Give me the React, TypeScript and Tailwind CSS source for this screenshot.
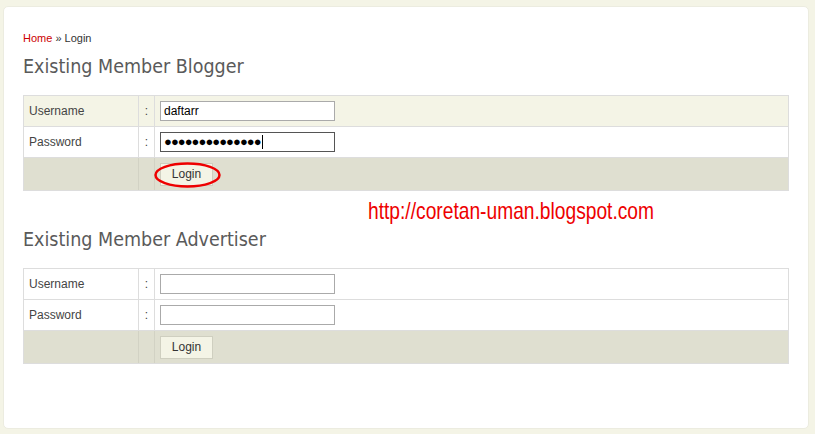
import React from 'react'

const font = { fontFamily: '"Liberation Sans", Arial, sans-serif' }
const headFont = { fontFamily: '"DejaVu Sans Condensed", "DejaVu Sans", sans-serif' }

type Row = { label: string; value?: string; password?: boolean; focused?: boolean }

const Field: React.FC<{ value?: string; password?: boolean; focused?: boolean }> = ({ value, password, focused }) => (
  <div
    className={`w-[175px] h-[20px] bg-white border flex items-center px-[3px] text-[12px] text-black ${focused ? 'border-[#555]' : 'border-[#aaa]'}`}
  >
    {password ? (
      <span className="flex items-center">
        <span className="tracking-[-0.95px] text-[13px]">{'●'.repeat(14)}</span>
        <span className="w-px h-[14px] bg-black ml-[1px]" />
      </span>
    ) : (
      <span>{value}</span>
    )}
  </div>
)

const LoginForm: React.FC<{ rows: Row[]; firstHighlighted?: boolean; circled?: boolean }> = ({ rows, firstHighlighted, circled }) => (
  <div className="border border-[#ddd] text-[12px] text-[#444]">
    {rows.map((row, i) => (
      <div
        key={row.label}
        className={`grid grid-cols-[115px_16px_1fr] h-[31px] border-b border-[#ddd] ${i === 0 && firstHighlighted ? 'bg-[#f4f4e6]' : 'bg-white'}`}
      >
        <div className="border-r border-[#ddd] flex items-center pl-[5px]">{row.label}</div>
        <div className="border-r border-[#ddd] flex items-center justify-center">:</div>
        <div className="flex items-center pl-[5px]">
          <Field value={row.value} password={row.password} focused={row.focused} />
        </div>
      </div>
    ))}
    <div className="grid grid-cols-[115px_16px_1fr] h-[32px] bg-[#dfdfd0]">
      <div className="border-r border-[#d2d2c4]" />
      <div className="border-r border-[#d2d2c4]" />
      <div className="flex items-center pl-[5px]">
        <div className="relative">
          <button className="w-[53px] h-[23px] bg-[#f4f4e6] border border-[#cfcfc0] text-[12px] text-[#333]" style={font}>
            Login
          </button>
          {circled && (
            <svg className="absolute left-[-6px] top-[-2px]" width="67" height="28" viewBox="0 0 67 28">
              <ellipse cx="33.5" cy="14" rx="32" ry="11.5" fill="none" stroke="#ee0000" strokeWidth="2.5" />
            </svg>
          )}
        </div>
      </div>
    </div>
  </div>
)

export default function App() {
  return (
    <div className="w-[815px] h-[434px] bg-[#f4f4e6] pt-[6px] pl-[3px]" style={font}>
      <div className="relative w-[806px] h-[423px] bg-white rounded-[5px] border border-[#ecece0] pt-[24px] pl-[19px] pr-[19px]">
        <div className="text-[11px] leading-[14px] text-[#333]">
          <span className="text-[#cc0000]">Home</span> » Login
        </div>
        <h2 className="mt-[10px] mb-[16px] text-[19.5px] leading-[24px] text-[#5a5a5a]" style={headFont}>
          Existing Member Blogger
        </h2>
        <LoginForm
          firstHighlighted
          circled
          rows={[
            { label: 'Username', value: 'daftarr' },
            { label: 'Password', password: true, focused: true },
          ]}
        />
        <h2 className="mt-[37px] mb-[16px] text-[19.5px] leading-[24px] text-[#5a5a5a]" style={headFont}>
          Existing Member Advertiser
        </h2>
        <LoginForm rows={[{ label: 'Username' }, { label: 'Password' }]} />

        <div
          className="absolute left-[364px] top-[190px] text-[24px] leading-[28px] text-[#ee0000] origin-left scale-x-[0.8]"
          style={{ fontFamily: '"Liberation Sans Narrow", "Liberation Sans", sans-serif' }}
        >
          http://coretan-uman.blogspot.com
        </div>
      </div>
    </div>
  )
}
